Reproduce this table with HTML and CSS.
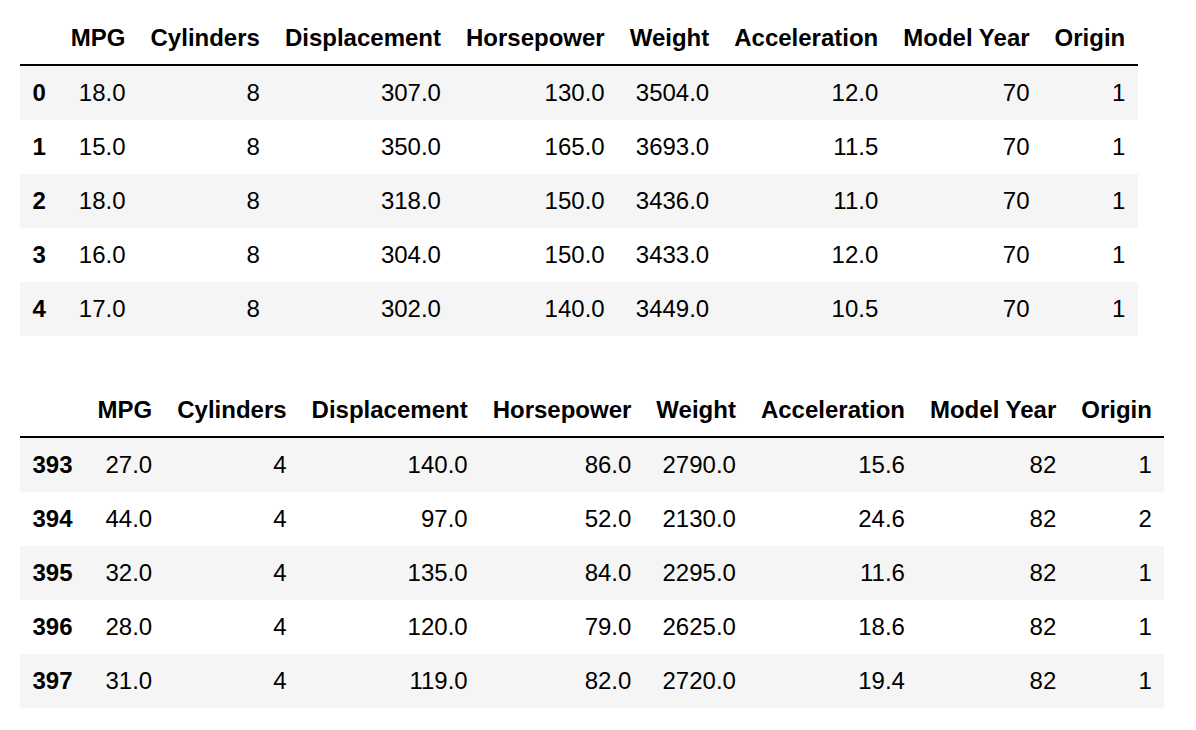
FILE: index.html
```html
<!DOCTYPE html>
<html lang="en">
<head>
<meta charset="utf-8">
<title>DataFrame head and tail</title>
<link rel="stylesheet" href="styles.css">
</head>
<body>
<div class="output">
  <table class="dataframe">
    <thead>
      <tr><th></th><th>MPG</th><th>Cylinders</th><th>Displacement</th><th>Horsepower</th><th>Weight</th><th>Acceleration</th><th>Model Year</th><th>Origin</th></tr>
    </thead>
    <tbody>
      <tr><th>0</th><td>18.0</td><td>8</td><td>307.0</td><td>130.0</td><td>3504.0</td><td>12.0</td><td>70</td><td>1</td></tr>
      <tr><th>1</th><td>15.0</td><td>8</td><td>350.0</td><td>165.0</td><td>3693.0</td><td>11.5</td><td>70</td><td>1</td></tr>
      <tr><th>2</th><td>18.0</td><td>8</td><td>318.0</td><td>150.0</td><td>3436.0</td><td>11.0</td><td>70</td><td>1</td></tr>
      <tr><th>3</th><td>16.0</td><td>8</td><td>304.0</td><td>150.0</td><td>3433.0</td><td>12.0</td><td>70</td><td>1</td></tr>
      <tr><th>4</th><td>17.0</td><td>8</td><td>302.0</td><td>140.0</td><td>3449.0</td><td>10.5</td><td>70</td><td>1</td></tr>
    </tbody>
  </table>
  <table class="dataframe">
    <thead>
      <tr><th></th><th>MPG</th><th>Cylinders</th><th>Displacement</th><th>Horsepower</th><th>Weight</th><th>Acceleration</th><th>Model Year</th><th>Origin</th></tr>
    </thead>
    <tbody>
      <tr><th>393</th><td>27.0</td><td>4</td><td>140.0</td><td>86.0</td><td>2790.0</td><td>15.6</td><td>82</td><td>1</td></tr>
      <tr><th>394</th><td>44.0</td><td>4</td><td>97.0</td><td>52.0</td><td>2130.0</td><td>24.6</td><td>82</td><td>2</td></tr>
      <tr><th>395</th><td>32.0</td><td>4</td><td>135.0</td><td>84.0</td><td>2295.0</td><td>11.6</td><td>82</td><td>1</td></tr>
      <tr><th>396</th><td>28.0</td><td>4</td><td>120.0</td><td>79.0</td><td>2625.0</td><td>18.6</td><td>82</td><td>1</td></tr>
      <tr><th>397</th><td>31.0</td><td>4</td><td>119.0</td><td>82.0</td><td>2720.0</td><td>19.4</td><td>82</td><td>1</td></tr>
    </tbody>
  </table>
</div>
</body>
</html>
```
FILE: styles.css
```css
html, body {
  margin: 0;
  padding: 0;
  background: #ffffff;
}

body {
  font-family: "Liberation Sans", Arial, sans-serif;
  color: #000000;
}

.output {
  display: flex;
  flex-direction: column;
  align-items: flex-start;
  gap: 48px;
  padding: 12px 0 0 20px;
}

.dataframe {
  border-collapse: collapse;
  border-spacing: 0;
  border: none;
  font-size: 24px;
  color: #000000;
}

.dataframe th,
.dataframe td {
  text-align: right;
  vertical-align: middle;
  padding: 12px 12.5px;
  line-height: 30px;
  white-space: nowrap;
  border: none;
}

.dataframe th {
  font-weight: bold;
}

.dataframe td {
  font-weight: normal;
}

.dataframe thead {
  border-bottom: 2px solid #000000;
}

.dataframe thead th {
  padding: 11px 12.5px;
}

.dataframe tbody tr:nth-child(odd) {
  background: #f5f5f5;
}
```
